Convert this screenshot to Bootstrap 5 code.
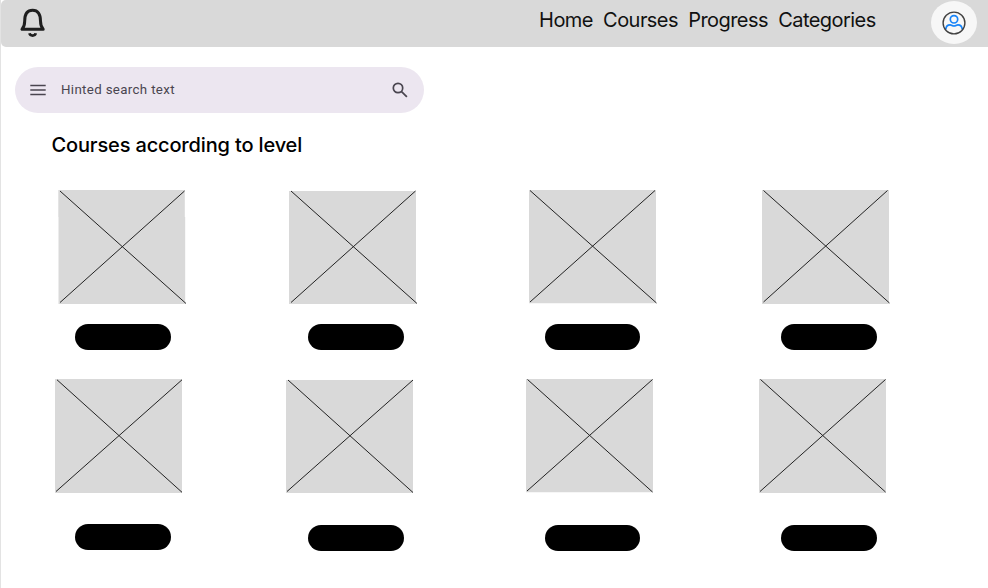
<!DOCTYPE html>
<html lang="en">
<head>
<meta charset="utf-8">
<meta name="viewport" content="width=device-width, initial-scale=1">
<title>Courses</title>
<link href="https://cdn.jsdelivr.net/npm/bootstrap@5.3.0/dist/css/bootstrap.min.css" rel="stylesheet">
<style>
body { font-family: Inter, "Liberation Sans", sans-serif; color: #000; height: 588px; overflow: hidden; border-left: 1px solid #e3e3e3; }
svg { display: block; flex: none; }
.topbar { height: 47px; background: #d9d9d9; border-radius: 5px 0 0 5px; padding: 0 11px 0 18px; }
.topbar .nav-link { font-size: 20px; line-height: 24px; color: #111; padding: 0; letter-spacing: -.55px; }
.topbar .nav { gap: 10.2px; margin: 0 55.3px 7px auto; }
.bell { margin-bottom: 1px; }
.avatar { width: 46px; height: 43px; background: #f7f7f7; margin-bottom: 2px; }
.search { width: 409px; height: 46px; background: #ece6f0; margin: 20px 0 0 14px; padding: 0 16px 0 15px; }
.search span { font-family: Roboto, sans-serif; font-size: 13.3px; letter-spacing: .34px; color: #49454f; margin-left: 15px; }
.level-title { font-size: 20px; line-height: 24px; font-weight: 500; letter-spacing: -.15px; margin: 20px 0 0 50.5px; }
.thumbs { display: grid; grid-template-columns: 231px 240px 233px 127px; height: 114px; }
.thumbs svg { width: 128px; height: 114px; }
.pills { display: grid; grid-template-columns: 233px 236.5px 236.5px 96px; margin-left: 74px; height: 27px; }
.pill { width: 95.5px; height: 26px; background: #000; }
.first-thumbs { margin: 33px 0 0 57px; }
.second-thumbs { margin: 28px 0 0 54px; }
.first-pills { margin-top: 20px; }
.second-pills { margin-top: 31px; }
.drop { margin-top: 1px; }
</style>
</head>
<body>
<header class="topbar d-flex align-items-center">
  <svg class="bell" width="28" height="30" viewBox="0 0 28 30" fill="none" stroke="#1e1e1e" stroke-width="3" stroke-linejoin="round" aria-label="Notifications">
    <path d="M3 21.300h21.200c-2-2.200-2.700-4.400-2.700-8.300C21.500 6 19 2.300 13.600 2.300S5.700 6 5.700 13c0 3.900-.7 6.100-2.700 8.300Z"/>
    <path d="M10.500 25.300c.7 3 5.500 3 6.200 0" stroke-width="2.800"/>
  </svg>
  <nav class="nav flex-nowrap">
    <a class="nav-link" href="#">Home</a>
    <a class="nav-link" href="#">Courses</a>
    <a class="nav-link" href="#">Progress</a>
    <a class="nav-link" href="#">Categories</a>
  </nav>
  <a class="avatar rounded-circle d-flex align-items-center justify-content-center" href="#" aria-label="Profile">
    <svg width="24" height="24" viewBox="0 0 24 24" fill="none" stroke-width="1.400">
      <g stroke="#1683f8" stroke-width="1.700"><circle cx="12" cy="8.300" r="3.700"/><path d="M3.800 18.400c.2-2.800 2-4.500 4.300-4.500 1.500 0 2.300 1.100 3.900 1.100s2.400-1.100 3.900-1.100c2.300 0 4.100 1.700 4.300 4.500"/></g>
      <circle cx="12" cy="12" r="10.900" stroke="#414141"/>
    </svg>
  </a>
</header>
<main>
  <div class="search rounded-pill d-flex align-items-center">
    <svg width="16" height="12" viewBox="0 0 16 12" stroke="#49454f" stroke-width="1.500"><path d="M.3 1.500h15.400M.3 6h15.400M.3 10.500h15.400"/></svg>
    <span>Hinted search text</span>
    <svg class="ms-auto" width="16" height="16" viewBox="0 0 16 16" fill="none" stroke="#49454f" stroke-width="1.700"><circle cx="6" cy="6" r="4.700"/><path d="m9.300 9.300 5.600 5.600"/></svg>
  </div>
  <h1 class="level-title">Courses according to level</h1>

  <div class="thumbs first-thumbs">
    <svg viewBox="0 0 128 114"><path fill="#d9d9d9" d="M.3 0h126.500v27h.4v87H.5V27H.3z"/><path stroke="#222" d="m2 1 126 112.500M126.500 1 2 112.500"/></svg>
    <svg viewBox="0 0 128 114"><path fill="#d9d9d9" d="M0 1h127v113H0z"/><path stroke="#222" d="m2 1 126 112.500M126.500 1 2 112.500"/></svg>
    <svg viewBox="0 0 128 114"><path fill="#d9d9d9" d="M0 0h127v113.300H0z"/><path stroke="#222" d="m1 .5 126.500 112.500M126 .5 1 112"/></svg>
    <svg viewBox="0 0 128 114"><path fill="#d9d9d9" d="M0 0h127v114H0z"/><path stroke="#222" d="m1.500.5 126 112.500M125.500.5 1.500 112"/></svg>
  </div>
  <div class="pills first-pills">
    <div class="pill rounded-pill"></div>
    <div class="pill rounded-pill"></div>
    <div class="pill rounded-pill"></div>
    <div class="pill rounded-pill"></div>
  </div>

  <div class="thumbs second-thumbs">
    <svg viewBox="0 0 128 114"><path fill="#d9d9d9" d="M0 0h127v114H0z"/><path stroke="#222" d="m2 .8 125 112.500M127 .8 1 112.500"/></svg>
    <svg viewBox="0 0 128 114"><path fill="#d9d9d9" d="M0 1h127v113H0z"/><path stroke="#222" d="m2 1 125 112.500M127 1 1 112.500"/></svg>
    <svg viewBox="0 0 128 114"><path fill="#d9d9d9" d="M0 0h127v113.300H0z"/><path stroke="#222" d="m1.500.5 125 112.500M126.500.5 1 112"/></svg>
    <svg viewBox="0 0 128 114"><path fill="#d9d9d9" d="M0 0h127v114H0z"/><path stroke="#222" d="m1.500.5 125 112.500M126.500.5 1 112.500"/></svg>
  </div>
  <div class="pills second-pills">
    <div class="pill rounded-pill"></div>
    <div class="pill rounded-pill drop"></div>
    <div class="pill rounded-pill drop"></div>
    <div class="pill rounded-pill drop"></div>
  </div>
</main>
<script src="https://cdn.jsdelivr.net/npm/bootstrap@5.3.0/dist/js/bootstrap.bundle.min.js"></script>
</body>
</html>
